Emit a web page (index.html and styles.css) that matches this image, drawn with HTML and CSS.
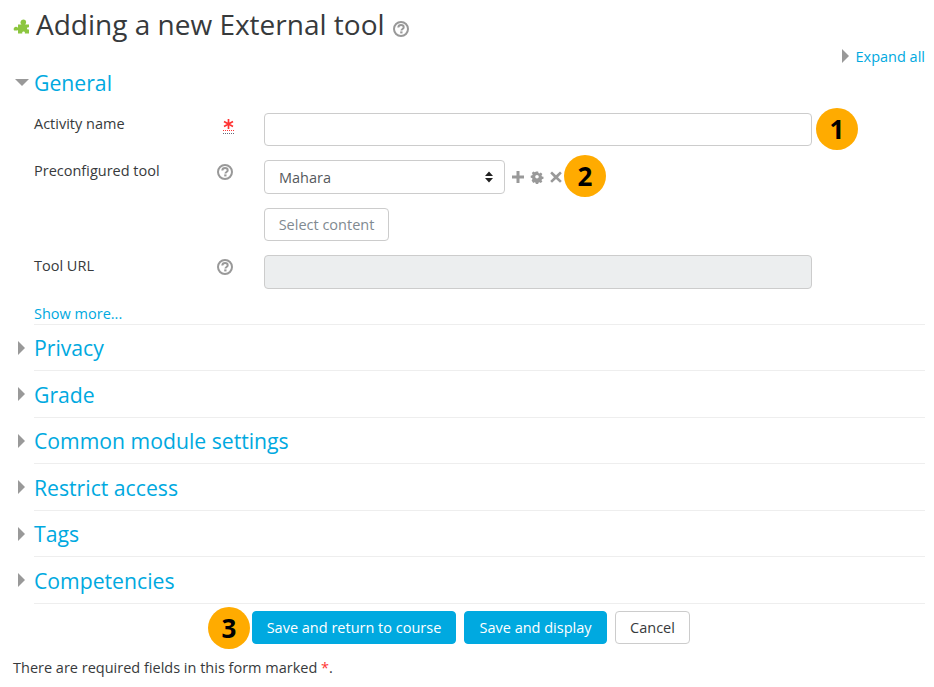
FILE: index.html
```html
<!DOCTYPE html>
<html lang="en">
<head>
    <meta charset="UTF-8">
    <meta name="viewport" content="width=device-width, initial-scale=1.0">
    <title>Adding a new External tool</title>
    <link rel="stylesheet" href="styles.css">
</head>
<body>
    <div class="page-title">
        <svg class="puzzle" width="17" height="17" viewBox="0 0 17 17">
            <path fill="#8cc63f" fill-rule="evenodd" d="M5 5.500h3.500C7.500 4.500 7.300 3.700 7.600 2.700 8 1.200 9.300.5 10.400.5c1.300 0 2.500.9 2.700 2.200.1 1-.2 2-1 2.800H16v3c-1-.5-1.500-.3-1.800.2-.3.600-.2 1.300.2 1.600.4.300 1 .4 1.600.1v4.100h-4.200c.3-.8.100-1.400-.4-1.700-.7-.4-2-.2-2.200.6-.1.400 0 .8.200 1.100H5v-3.500c-.7.500-1.500.7-2.400.4C1.300 12 .6 11 .7 9.900.8 8.800 1.700 7.800 2.900 7.800c.8 0 1.500.3 2.100.9z"/>
        </svg>
        <h1>Adding a new External tool</h1>
        <svg class="help help-title" viewBox="0 0 16 16"><use href="#help-icon"/></svg>
    </div>

    <div class="expand-row">
        <span class="arrow-right"></span>
        <a href="#" class="link">Expand all</a>
    </div>

    <form class="tool-form">
        <div class="section-head section-general">
            <span class="arrow-down"></span>
            <a href="#" class="section-title">General</a>
        </div>

        <div class="field-row field-name">
            <label class="field-label">Activity name</label>
            <span class="field-icon">
                <svg class="required-mark" width="14" height="16" viewBox="0 0 14 16">
                    <path d="M6.500 0v10M2 2.500l9 5M11 2.500l-9 5" stroke="#f33" stroke-width="1.700" fill="none"/>
                    <path d="M1 11.500h12" stroke="#f33" stroke-width="1" stroke-dasharray="1 1" fill="none"/>
                    <path d="M1 14.500h12" stroke="#667" stroke-width="1" stroke-dasharray="1 1" fill="none"/>
                </svg>
            </span>
            <div class="field-control">
                <input type="text" class="text-input">
                <span class="badge badge-one">1</span>
            </div>
        </div>

        <div class="field-row field-preconf">
            <label class="field-label">Preconfigured tool</label>
            <span class="field-icon"><svg class="help" viewBox="0 0 16 16"><use href="#help-icon"/></svg></span>
            <div class="field-control">
                <div class="select-box">
                    <span>Mahara</span>
                    <svg width="8" height="12" viewBox="0 0 8 12"><path fill="#222" d="M4 0.500 8 5H0zM0 7h8L4 11.500z"/></svg>
                </div>
                <div class="tool-icons">
                    <svg width="14" height="14" viewBox="0 0 14 14"><path fill="#999" d="M5.500 1h3v4.500H13v3H8.500V13h-3V8.500H1v-3h4.500z"/></svg>
                    <svg width="14" height="14" viewBox="0 0 14 14"><path fill="#999" fill-rule="evenodd" d="M5.700 1h2.600l.3 1.700 1.100.5 1.500-1 1.800 1.800-1 1.500.5 1.100 1.700.3v2.400l-1.700.3-.5 1.100 1 1.500-1.800 1.800-1.500-1-1.100.5-.3 1.700H5.700l-.3-1.700-1.100-.5-1.500 1L1 11l1-1.500-.5-1.100L0 8.100V5.700l1.700-.3.5-1.100-1-1.500L3 1l1.500 1 1.100-.5zM7 5a2 2 0 1 0 0 4 2 2 0 0 0 0-4z" transform="translate(.7 .5) scale(.9)"/></svg>
                    <svg width="14" height="14" viewBox="0 0 14 14"><path fill="#999" d="M3 1.500 7 5.300l4-3.800 1.800 1.800L9 7.200l3.800 3.800-1.800 1.800-4-3.800-4 3.800L1.200 11 5 7.200 1.200 3.300z"/></svg>
                </div>
                <span class="badge badge-two">2</span>
            </div>
        </div>

        <div class="field-row field-select">
            <span class="field-label"></span>
            <span class="field-icon"></span>
            <div class="field-control">
                <button type="button" class="btn btn-plain">Select content</button>
            </div>
        </div>

        <div class="field-row field-url">
            <label class="field-label">Tool URL</label>
            <span class="field-icon"><svg class="help" viewBox="0 0 16 16"><use href="#help-icon"/></svg></span>
            <div class="field-control">
                <div class="text-input text-input-disabled"></div>
            </div>
        </div>

        <div class="show-more"><a href="#" class="link">Show more...</a></div>

        <div class="section-head section-closed"><span class="arrow-right"></span><a href="#" class="section-title">Privacy</a></div>
        <div class="section-head section-closed"><span class="arrow-right"></span><a href="#" class="section-title">Grade</a></div>
        <div class="section-head section-closed"><span class="arrow-right"></span><a href="#" class="section-title">Common module settings</a></div>
        <div class="section-head section-closed"><span class="arrow-right"></span><a href="#" class="section-title">Restrict access</a></div>
        <div class="section-head section-closed"><span class="arrow-right"></span><a href="#" class="section-title">Tags</a></div>
        <div class="section-head section-closed"><span class="arrow-right"></span><a href="#" class="section-title">Competencies</a></div>

        <div class="form-buttons">
            <span class="badge badge-three">3</span>
            <button type="button" class="btn btn-primary btn-return">Save and return to course</button>
            <button type="button" class="btn btn-primary btn-display">Save and display</button>
            <button type="button" class="btn btn-cancel">Cancel</button>
        </div>
    </form>

    <p class="required-note">There are required fields in this form marked <span class="note-star">*</span>.</p>

    <svg width="0" height="0" class="icon-defs">
        <defs>
            <g id="help-icon">
                <circle cx="8" cy="8" r="7" fill="none" stroke="#999" stroke-width="2"/>
                <path d="M5.300 6.500C5.400 4.800 6.600 4 8 4c1.600 0 2.700.9 2.700 2.200 0 1.900-2.300 1.700-2.300 3.400" fill="none" stroke="#999" stroke-width="2"/>
                <rect x="7.200" y="10.400" width="2.300" height="2" fill="#999"/>
            </g>
        </defs>
    </svg>
</body>
</html>
```

FILE: styles.css
```css
body {
    margin: 0;
    padding: 0 9px 0 13px;
    font-family: "Open Sans", sans-serif;
    font-size: 14.5px;
    color: #373a3c;
    background-color: #fff;
}
a {
    text-decoration: none;
}
.link {
    color: #00a9e0;
}
.page-title {
    display: flex;
    align-items: center;
    height: 49px;
}
.puzzle {
    margin-right: 6px;
    margin-top: 5px;
}
h1 {
    margin: 0 0 2px;
    font-size: 28px;
    font-weight: 400;
    color: #373a3c;
}
.help {
    display: block;
    width: 16px;
    height: 16px;
}
.help-title {
    margin-left: 8px;
    margin-top: 8px;
}
.expand-row {
    display: flex;
    justify-content: flex-end;
    align-items: center;
    gap: 7px;
    height: 14px;
}
.arrow-right {
    width: 0;
    height: 0;
    border-left: 7px solid #999;
    border-top: 7px solid transparent;
    border-bottom: 7px solid transparent;
}
.arrow-down {
    width: 0;
    height: 0;
    border-top: 7px solid #999;
    border-left: 7px solid transparent;
    border-right: 7px solid transparent;
}
.section-head {
    display: flex;
    align-items: center;
    height: 46.5px;
    position: relative;
}
.section-general {
    height: 39px;
}
.section-title {
    position: absolute;
    left: 21px;
    font-size: 21.2px;
    color: #00a9e0;
}
.section-head .arrow-down {
    margin-left: 2px;
}
.section-head .arrow-right {
    margin-left: 5px;
}
.section-closed::after {
    content: "";
    position: absolute;
    left: 21px;
    right: 0;
    bottom: 0;
    border-bottom: 1px solid #eee;
}
.field-row {
    display: flex;
    padding-left: 21px;
}
.field-name {
    margin-top: 11px;
}
.field-preconf {
    margin-top: 14px;
}
.field-select {
    margin-top: 14px;
}
.field-url {
    margin-top: 14px;
}
.field-label {
    width: 183px;
    line-height: 21px;
}
.field-icon {
    width: 47px;
    display: block;
    padding-top: 4px;
}
.field-control {
    display: flex;
    align-items: center;
}
.required-mark {
    display: block;
    margin-left: 5px;
    margin-top: 2px;
}
.text-input {
    box-sizing: border-box;
    display: block;
    width: 548px;
    height: 33px;
    margin: 0;
    border: 1px solid #ccc;
    border-radius: 4px;
    background-color: #fff;
}
.text-input-disabled {
    height: 34px;
    background-color: #eceeef;
}
.select-box {
    box-sizing: border-box;
    display: flex;
    align-items: center;
    justify-content: space-between;
    width: 241px;
    height: 34px;
    padding: 0 11px 0 14px;
    border: 1px solid #ccc;
    border-radius: 4px;
    color: #55595c;
}
.tool-icons {
    display: flex;
    gap: 5px;
    margin-left: 6px;
}
.btn {
    box-sizing: border-box;
    height: 33px;
    padding: 0;
    border: 1px solid #ccc;
    border-radius: 4px;
    background-color: #fff;
    font-family: "Open Sans", sans-serif;
    font-size: 14.5px;
}
.btn-plain {
    width: 125px;
    color: #818a91;
}
.btn-primary {
    background-color: #00a9e0;
    border-color: #00a9e0;
    color: #fff;
}
.btn-cancel {
    width: 75px;
    color: #373a3c;
}
.btn-return {
    width: 204px;
}
.btn-display {
    width: 143px;
}
.show-more {
    display: flex;
    align-items: center;
    height: 22.5px;
    margin-top: 13px;
    padding-left: 21px;
    position: relative;
}
.show-more::after {
    content: "";
    position: absolute;
    left: 21px;
    right: 0;
    bottom: 0;
    border-bottom: 1px solid #eee;
}
.form-buttons {
    display: flex;
    gap: 8px;
    margin-top: 7.5px;
    padding-left: 239px;
    position: relative;
}
.badge {
    position: absolute;
    display: flex;
    align-items: center;
    justify-content: center;
    width: 42px;
    height: 42px;
    border-radius: 50%;
    background-color: #ffab00;
    color: #000;
    font-size: 26px;
    font-weight: 700;
    line-height: 1;
}
.badge-one {
    left: 816px;
    top: 108px;
}
.badge-two {
    left: 564px;
    top: 155px;
}
.badge-three {
    left: 195px;
    top: -4px;
}
.required-note {
    margin: 14px 0 0;
    line-height: 20px;
}
.note-star {
    color: #f33;
}
.icon-defs {
    position: absolute;
}
```
